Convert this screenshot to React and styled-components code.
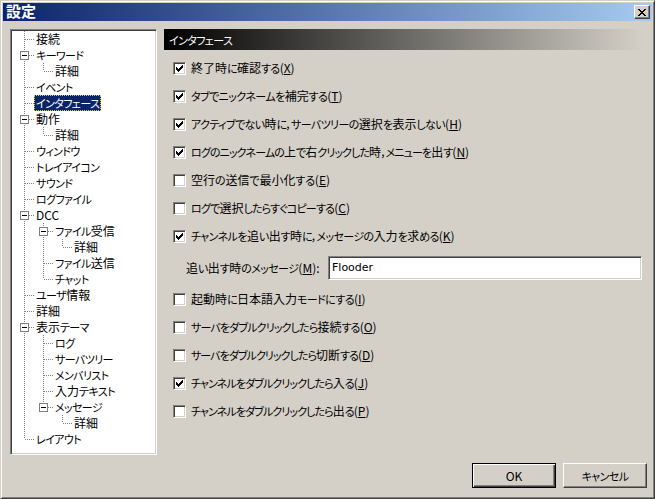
import React from 'react';
import styled, { createGlobalStyle } from 'styled-components';

const GlobalStyle = createGlobalStyle`
  html, body {
    margin: 0;
    padding: 0;
    background: #d4d0c8;
  }
  * {
    box-sizing: border-box;
  }
`;

const treeRows = [
  { label: '接続', guides: ['tee'] },
  { label: 'キーワード', guides: ['minus'] },
  { label: '詳細', guides: ['pipe', 'elbow'] },
  { label: 'イベント', guides: ['tee'] },
  { label: 'インタフェース', guides: ['tee'], selected: true },
  { label: '動作', guides: ['minus'] },
  { label: '詳細', guides: ['pipe', 'elbow'] },
  { label: 'ウィンドウ', guides: ['tee'] },
  { label: 'トレイアイコン', guides: ['tee'] },
  { label: 'サウンド', guides: ['tee'] },
  { label: 'ログファイル', guides: ['tee'] },
  { label: 'DCC', guides: ['minus'] },
  { label: 'ファイル受信', guides: ['pipe', 'minus'] },
  { label: '詳細', guides: ['pipe', 'pipe', 'elbow'] },
  { label: 'ファイル送信', guides: ['pipe', 'tee'] },
  { label: 'チャット', guides: ['pipe', 'elbow'] },
  { label: 'ユーザ情報', guides: ['tee'] },
  { label: '詳細', guides: ['tee'] },
  { label: '表示テーマ', guides: ['minus'] },
  { label: 'ログ', guides: ['pipe', 'tee'] },
  { label: 'サーバツリー', guides: ['pipe', 'tee'] },
  { label: 'メンバリスト', guides: ['pipe', 'tee'] },
  { label: '入力テキスト', guides: ['pipe', 'tee'] },
  { label: 'メッセージ', guides: ['pipe', 'minusEnd'] },
  { label: '詳細', guides: ['pipe', 'blank', 'elbow'] },
  { label: 'レイアウト', guides: ['elbow'] },
];

const options = [
  { label: '終了時に確認する', key: 'X', checked: true },
  { label: 'タブでニックネームを補完する', key: 'T', checked: true },
  { label: 'アクティブでない時に，サーバツリーの選択を表示しない', key: 'H', checked: true },
  { label: 'ログのニックネームの上で右クリックした時，メニューを出す', key: 'N', checked: true, tight: 0.3 },
  { label: '空行の送信で最小化する', key: 'E', tight: -0.4 },
  { label: 'ログで選択したらすぐコピーする', key: 'C', tight: 0.2 },
  { label: 'チャンネルを追い出す時に，メッセージの入力を求める', key: 'K', checked: true, message: true },
  { label: '起動時に日本語入力モードにする', key: 'I' },
  { label: 'サーバをダブルクリックしたら接続する', key: 'O', tight: 0.25 },
  { label: 'サーバをダブルクリックしたら切断する', key: 'D', tight: 0.35 },
  { label: 'チャンネルをダブルクリックしたら入る', key: 'J', checked: true, tight: 0.3 },
  { label: 'チャンネルをダブルクリックしたら出る', key: 'P', tight: 0.3 },
];

// kana and the fullwidth comma run narrower than kanji in the old UI font
const JpText = ({ text }) => text.split(/([\u3040-\u30ff，]+)/).map((part, i) => (
  i % 2 ? <Kana key={i}>{part}</Kana> : part
));

const TreeGuide = ({ kind }) => {
  const isBox = kind === 'minus' || kind === 'minusEnd';
  return (
    <svg width="19" height="16" viewBox="0 0 19 16" shapeRendering="crispEdges" style={{ flex: 'none' }}>
      <g stroke="#808080" strokeWidth="1" strokeDasharray="1 1" fill="none">
        {(kind === 'pipe' || kind === 'tee' || kind === 'minus') && <path d="M9.5 0V16" />}
        {(kind === 'elbow' || kind === 'minusEnd') && <path d="M9.5 0V8" />}
        {(kind === 'tee' || kind === 'elbow' || isBox) && <path d="M10 8.5H19" />}
      </g>
      {isBox && (
        <>
          <rect x="5.5" y="4.5" width="8" height="8" fill="#fff" stroke="#808080" />
          <path d="M7 8.5H12" stroke="#000" />
        </>
      )}
    </svg>
  );
};

const CheckMark = () => (
  <svg width="7" height="7" viewBox="0 0 7 7" shapeRendering="crispEdges">
    <path d="M6 0h1v1H6zM5 1h2v1H5zM0 2h1v1H0zM4 2h3v1H4zM0 3h2v1H0zM3 3h3v1H3zM0 4h5v1H0zM1 5h3v1H1zM2 6h1v1H2z" fill="#000" />
  </svg>
);

const CloseGlyph = () => (
  <svg width="8" height="7" viewBox="0 0 8 7" shapeRendering="crispEdges">
    <path d="M0 0h2v1h1v1h2V1h1V0h2v1H7v1H6v1H5v1h1v1h1v1h1v1H6V6H5V5H3v1H2v1H0V6h1V5h1V4h1V3H2V2H1V1H0z" fill="#000" />
  </svg>
);

const App = () => (
  <Window>
    <GlobalStyle />
    <TitleBar>
      <TitleText>設定</TitleText>
      <CloseButton><CloseGlyph /></CloseButton>
    </TitleBar>
    <Body>
      <Main>
        <TreePanel>
          {treeRows.map((row, index) => (
            <TreeRow key={index}>
              {row.guides.map((kind, i) => <TreeGuide key={i} kind={kind} />)}
              <TreeLabel $selected={row.selected}><JpText text={row.label} /></TreeLabel>
            </TreeRow>
          ))}
        </TreePanel>
        <Settings>
          <SectionHeader><JpText text="インタフェース" /></SectionHeader>
          <OptionList>
            {options.map((option) => (
              <React.Fragment key={option.key}>
                <OptionRow>
                  <CheckBox>{option.checked && <CheckMark />}</CheckBox>
                  <OptionLabel $tight={option.tight}><JpText text={option.label} />(<Mnemonic>{option.key}</Mnemonic>)</OptionLabel>
                </OptionRow>
                {option.message && (
                  <MessageRow>
                    <OptionLabel><JpText text="追い出す時のメッセージ" />(<Mnemonic>M</Mnemonic>):</OptionLabel>
                    <MessageInput readOnly value="Flooder" />
                  </MessageRow>
                )}
              </React.Fragment>
            ))}
          </OptionList>
        </Settings>
      </Main>
      <Footer>
        <DialogButton $default>OK</DialogButton>
        <DialogButton><JpText text="キャンセル" /></DialogButton>
      </Footer>
    </Body>
  </Window>
);

export default App;

const uiFont = `"Noto Sans CJK JP", "Liberation Sans", sans-serif`;

const Window = styled.div`
  width: 655px;
  height: 499px;
  display: flex;
  flex-direction: column;
  padding: 2px 3px 3px 3px;
  background: #d4d0c8;
  border-top: 1px solid #d4d0c8;
  border-left: 1px solid #d4d0c8;
  border-right: 1px solid #404040;
  border-bottom: 1px solid #404040;
  box-shadow: inset 1px 1px 0 #fff, inset -1px -1px 0 #808080;
  font-family: ${uiFont};
  font-size: 12px;
  color: #000;
`;

const TitleBar = styled.div`
  height: 18px;
  flex: none;
  margin: 0 -1px 0 -1px;
  display: flex;
  align-items: center;
  justify-content: space-between;
  padding: 0 2px 0 2px;
  background: linear-gradient(90deg, #0a246a, #a6caf0);
`;

const TitleText = styled.span`
  align-self: flex-start;
  color: #fff;
  font-size: 15px;
  font-weight: 700;
  line-height: 16px;
  padding-left: 1px;
`;

const CloseButton = styled.div`
  width: 16px;
  height: 14px;
  display: flex;
  align-items: center;
  justify-content: center;
  background: #d4d0c8;
  border-top: 1px solid #fff;
  border-left: 1px solid #fff;
  border-right: 1px solid #404040;
  border-bottom: 1px solid #404040;
  box-shadow: inset -1px -1px 0 #808080;
`;

const Body = styled.div`
  flex: 1;
  display: flex;
  flex-direction: column;
  padding: 8px 3px 0 6px;
`;

const Main = styled.div`
  display: flex;
  gap: 7px;
`;

const TreePanel = styled.div`
  width: 147px;
  height: 426px;
  flex: none;
  padding: 1px 0 0 4px;
  background: #fff;
  border-top: 1px solid #808080;
  border-left: 1px solid #808080;
  border-right: 1px solid #fff;
  border-bottom: 1px solid #fff;
  box-shadow: inset 1px 1px 0 #404040, inset -1px -1px 0 #d4d0c8;
`;

const TreeRow = styled.div`
  height: 16px;
  display: flex;
  align-items: center;
`;

const Kana = styled.span`
  font-size: 11px;
  letter-spacing: calc(-0.6px - var(--kana-tight, 0px));
  font-feature-settings: "palt";
`;

const TreeLabel = styled.span`
  height: 16px;
  line-height: 15px;
  padding: 0 2px;
  white-space: nowrap;
  color: ${({ $selected }) => ($selected ? '#fff' : '#000')};
  background: ${({ $selected }) => ($selected ? '#0a246a' : 'transparent')};
  outline: ${({ $selected }) => ($selected ? '1px dotted #d4c86a' : 'none')};
  outline-offset: -1px;
`;

const Settings = styled.div`
  flex: 1;
  min-width: 0;
`;

const SectionHeader = styled.div`
  height: 21px;
  width: 480px;
  padding-left: 5px;
  line-height: 21px;
  color: #fff;
  background: linear-gradient(90deg, #000, #d4d0c8);
`;

const OptionList = styled.div`
  display: flex;
  flex-direction: column;
  margin-top: 4px;
  padding-left: 9px;
`;

const OptionRow = styled.div`
  height: 28px;
  display: flex;
  align-items: center;
  gap: 5px;
`;

const CheckBox = styled.div`
  width: 13px;
  height: 13px;
  flex: none;
  display: flex;
  align-items: center;
  justify-content: center;
  background: #fff;
  border-top: 1px solid #808080;
  border-left: 1px solid #808080;
  border-right: 1px solid #fff;
  border-bottom: 1px solid #fff;
  box-shadow: inset 1px 1px 0 #404040, inset -1px -1px 0 #d4d0c8;
`;

const OptionLabel = styled.span`
  --kana-tight: ${({ $tight }) => $tight || 0}px;
  white-space: nowrap;
  line-height: 16px;
`;

const Mnemonic = styled.span`
  text-decoration: underline;
`;

const MessageRow = styled.div`
  height: 35px;
  display: flex;
  align-items: center;
  padding-left: 13px;
`;

const MessageInput = styled.input`
  width: 314px;
  height: 24px;
  flex: none;
  margin-left: auto;
  margin-right: 6px;
  padding: 0 3px;
  font-family: "DejaVu Sans", sans-serif;
  font-size: 11px;
  color: #000;
  background: #fff;
  border-top: 1px solid #808080;
  border-left: 1px solid #808080;
  border-right: 1px solid #fff;
  border-bottom: 1px solid #fff;
  box-shadow: inset 1px 1px 0 #404040, inset -1px -1px 0 #d4d0c8;
  outline: none;
`;

const Footer = styled.div`
  display: flex;
  justify-content: flex-end;
  gap: 7px;
  margin-top: 8px;
  padding-right: 1px;
`;

const DialogButton = styled.button`
  width: 84px;
  height: 25px;
  padding: 0;
  font-family: ${uiFont};
  font-size: 12px;
  color: #000;
  background: #d4d0c8;
  border-top: 1px solid ${({ $default }) => ($default ? '#000' : '#fff')};
  border-left: 1px solid ${({ $default }) => ($default ? '#000' : '#fff')};
  border-right: 1px solid ${({ $default }) => ($default ? '#000' : '#404040')};
  border-bottom: 1px solid ${({ $default }) => ($default ? '#000' : '#404040')};
  box-shadow: ${({ $default }) => ($default
    ? 'inset 1px 1px 0 #fff, inset -1px -1px 0 #404040, inset -2px -2px 0 #808080'
    : 'inset -1px -1px 0 #808080')};
`;
